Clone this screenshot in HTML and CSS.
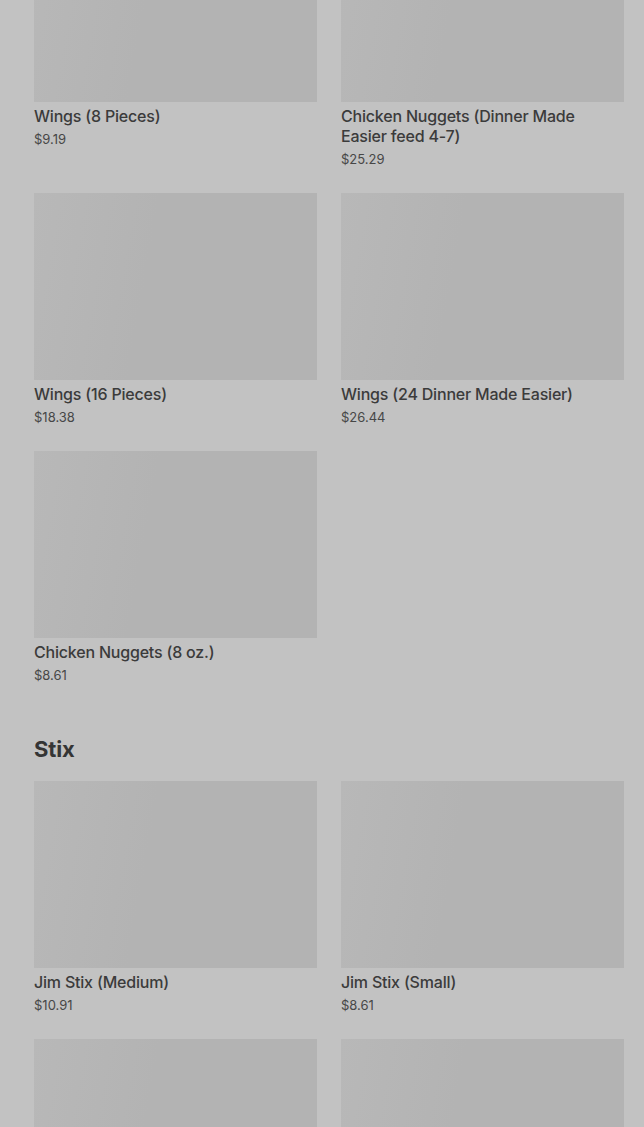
FILE: index.html
```html
<!DOCTYPE html>
<html lang="en">
	<head>
		<meta charset="UTF-8" />
		<title>Menu</title>
		<link rel="stylesheet" href="styles.css">
	</head>
	<body>
		<div class="page">
			<section class="menu first">
				<div class="grid">
					<div class="item">
						<div class="thumb"></div>
						<div class="name">Wings (8 Pieces)</div>
						<div class="price">$9.19</div>
					</div>
					<div class="item">
						<div class="thumb"></div>
						<div class="name">Chicken Nuggets (Dinner Made Easier feed 4-7)</div>
						<div class="price">$25.29</div>
					</div>
					<div class="item">
						<div class="thumb"></div>
						<div class="name">Wings (16 Pieces)</div>
						<div class="price">$18.38</div>
					</div>
					<div class="item">
						<div class="thumb"></div>
						<div class="name">Wings (24 Dinner Made Easier)</div>
						<div class="price">$26.44</div>
					</div>
					<div class="item">
						<div class="thumb"></div>
						<div class="name">Chicken Nuggets (8 oz.)</div>
						<div class="price">$8.61</div>
					</div>
				</div>
			</section>

			<section class="menu">
				<h2>Stix</h2>
				<div class="grid">
					<div class="item">
						<div class="thumb"></div>
						<div class="name">Jim Stix (Medium)</div>
						<div class="price">$10.91</div>
					</div>
					<div class="item">
						<div class="thumb"></div>
						<div class="name">Jim Stix (Small)</div>
						<div class="price">$8.61</div>
					</div>
					<div class="item">
						<div class="thumb"></div>
					</div>
					<div class="item">
						<div class="thumb"></div>
					</div>
				</div>
			</section>
		</div>
	</body>
</html>
```

FILE: styles.css
```css
html,
body {
	margin: 0;
	background: #c2c2c2;
	overflow: hidden;
}

body {
	font-family: Inter, "Noto Sans", sans-serif;
	color: #3a3a3a;
}

.page {
	padding: 0 20px 0 34px;
}

.menu.first {
	margin-top: -85px;
}

.menu h2 {
	margin: 51px 0 18px;
	font-size: 22px;
	line-height: 28px;
	font-weight: 700;
	color: #353535;
	letter-spacing: -0.1px;
}

.grid {
	display: grid;
	grid-template-columns: 1fr 1fr;
	column-gap: 24px;
	row-gap: 25px;
}

.thumb {
	height: 187px;
	background: linear-gradient(100deg, #b8b8b8 0%, #b3b3b3 40%, #b3b3b3 100%);
}

.name {
	margin-top: 4px;
	font-size: 16px;
	line-height: 20px;
	font-weight: 500;
	color: #3b3b3b;
	letter-spacing: -0.2px;
}

.price {
	margin-top: 4px;
	font-size: 13px;
	line-height: 18px;
	color: #474747;
}
```
